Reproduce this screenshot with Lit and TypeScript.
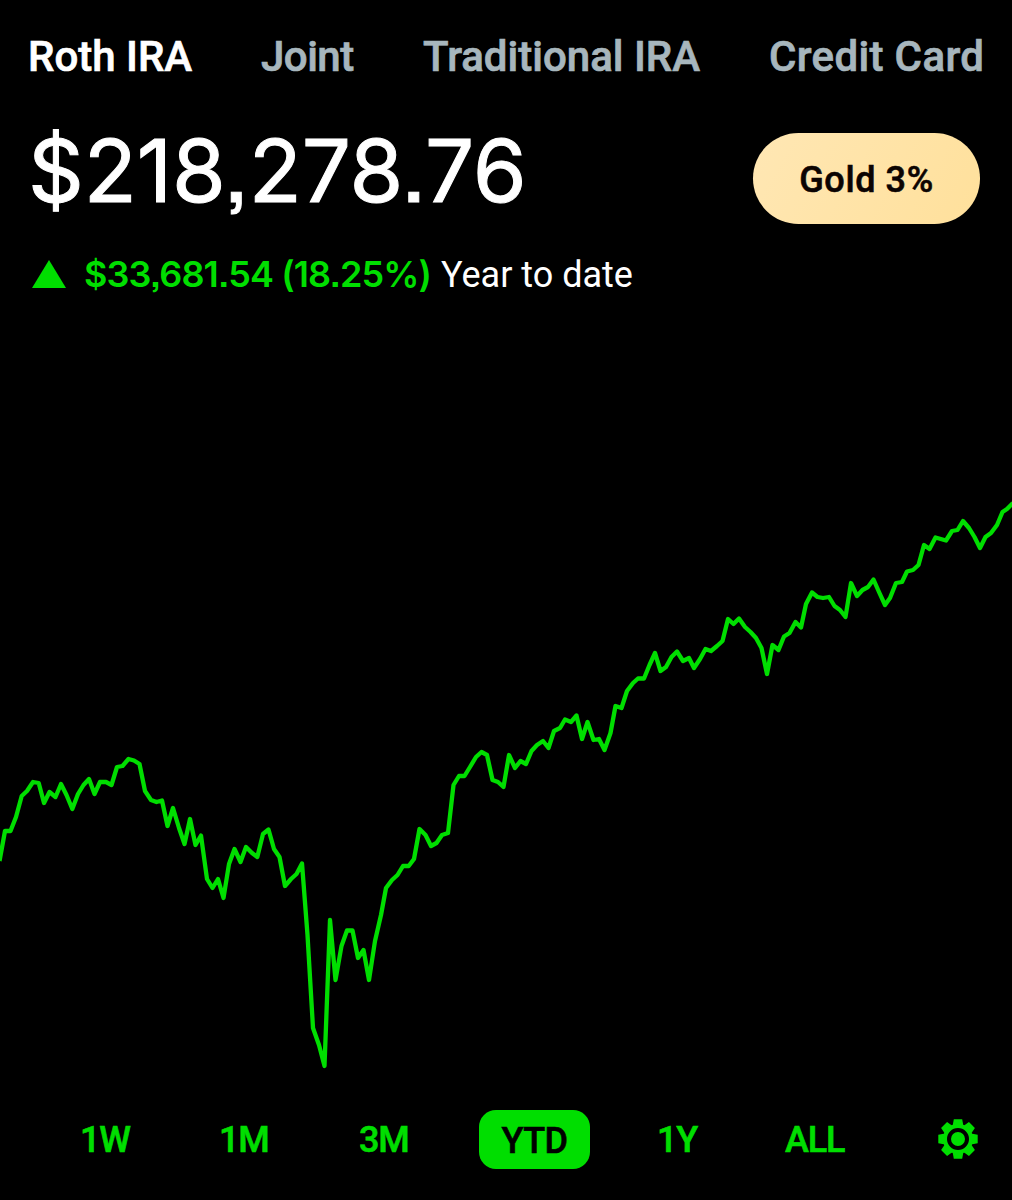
import { LitElement, html, svg, css } from "lit";
import { customElement, state } from "lit/decorators.js";
import { classMap } from "lit/directives/class-map.js";

const ACCOUNTS = [
  { name: "Roth IRA", cls: "roth" },
  { name: "Joint", cls: "joint" },
  { name: "Traditional IRA", cls: "trad" },
  { name: "Credit Card", cls: "credit" },
];
const RANGES = ["1W", "1M", "3M", "YTD", "1Y", "ALL"];

// Balance history, in chart units (x, y).
const HISTORY =
  "-0.5,861 5,831 10.5,831 16,817 21.7,796 27,791 33,782 38.7,783 44,803 49.5,792 55.5,797 61,784 66.5,795 72.3,809 78,794 83.5,785 89,779 94.5,794 100,782 106,782 111.5,785 117,767 122.5,766 128.5,759 134,760.5 139.5,764 145,791 151,800 156.5,802 162,800.5 167.5,826 173,808 179,828 184.5,844 190,819 195.5,845 201,835.5 207,879 212.5,888 218,879 223.5,898 229,864 234.5,849 240.5,862 246,847 252,853 257.3,857 263,834 268.5,829.5 274,849 279.5,857 285,886 291,879 296.5,874 302,863.5 307.5,935 313,1028 319,1045 324.5,1066 330,920 335.5,980 341.5,946 347,930.5 352.5,930.5 358,958 363.5,950 369,980 375,941 381,915 386,888 392,880 397.5,875 403,866 408.7,866 414,859 419.5,829 425.5,835 431,846 436.5,843 442,835 448,833 453.5,785 459,776 464.5,776 470,767 476,757 481.5,752 487,755 492.5,780 498,782 503.5,787 509,755 515,768 520.5,761 526,764 531.5,751 537,745 543,741 548.5,748 554,731 560,728 565,719.5 571,722 576.5,715.5 582,739 587.5,722 593.5,740 599,739 604.5,750 610.5,733 615.5,706 621.5,708 627,691 633,683 638,678.5 644,678.5 649.5,665 655,653 660.5,671 666,667 671.5,657 677,651.5 683,661 689,658 694,668 700,659 705.5,649 711,651 717,646 722.5,641 728,619 733.5,624 739,618.5 745,627 750.5,632 756,638 761.5,648 767,674 772.5,645 778.5,650 784,636.5 789.5,633 795.5,622 801,627.5 806,604 812,592.5 817.5,597 823,598 829,597 834.5,606 840,610 845.5,617 851,583 857,596 862.5,590 868,587 873.5,579.5 879,592 885,605 890,598 896,583 902,582 907,571.5 913,570 918.5,565 924,545 929.5,549 935.5,537.5 946,540.5 952,531 957.5,530 963,521 969,528 974.5,537 980,548 985.5,537 991,533 997,525 1002.5,512 1007,509 1013,503";

@customElement("app-root")
export class AppRoot extends LitElement {
  static styles = css`
    :host {
      display: flex;
      flex-direction: column;
      width: 1012px;
      height: 1200px;
      overflow: hidden;
      background: #000;
      color: #fff;
      font-family: Roboto, "Liberation Sans", sans-serif;
      white-space: nowrap;
    }
    .tabs {
      display: grid;
      grid-template-columns: 233px 162px 346px 1fr;
      height: 112px;
      padding-left: 28px;
      box-sizing: border-box;
      align-items: center;
      font-size: 42px;
      font-weight: 500;
      color: #a7b6bd;
      -webkit-text-stroke: 0.7px currentColor;
    }
    .tab.active { color: #fff; }
    .joint { letter-spacing: -0.5px; }
    .credit { letter-spacing: 0.35px; }
    .summary {
      display: flex;
      justify-content: space-between;
      height: 124px;
      padding: 0 32px 0 28px;
    }
    .balance {
      font-family: Inter, Roboto, sans-serif;
      font-feature-settings: "ss07";
      font-size: 87px;
      line-height: 118px;
      letter-spacing: -0.1px;
      -webkit-text-stroke: 1px currentColor;
    }
    .gold {
      box-sizing: border-box;
      width: 227px;
      height: 91px;
      margin-top: 21px;
      border-radius: 46px;
      background: linear-gradient(120deg, #ffe7b4, #ffe09b);
      color: #0c0402;
      font-size: 36px;
      font-weight: 500;
      letter-spacing: 0.6px;
      -webkit-text-stroke: 0.6px currentColor;
      line-height: 94px;
      text-align: center;
    }
    .change {
      display: flex;
      align-items: center;
      height: 76px;
      padding-left: 32px;
      font-size: 36px;
      line-height: 44px;
    }
    .arrow { width: 34px; height: 28px; margin-right: 18px; fill: #00de00; }
    .gain {
      width: 357px;
      color: #00de00;
      font-family: Inter, Roboto, sans-serif;
      font-feature-settings: "ss07";
      font-weight: 600;
      letter-spacing: -0.9px;
    }
    .period { padding-top: 2px; }
    .chart { display: block; width: 1012px; height: 788px; flex: none; }
    .line {
      fill: none;
      stroke: #00de00;
      stroke-width: 4.3;
      stroke-linejoin: round;
    }
    .ranges {
      display: grid;
      grid-template-columns: 139px 140px 120px 111px 67px 128px 153px 40px;
      padding-left: 80px;
      height: 78px;
      align-items: center;
      color: #00de00;
      font-size: 36px;
      font-weight: 500;
      -webkit-text-stroke: 0.6px currentColor;
    }
    .range { padding-top: 2px; letter-spacing: -1.2px; }
    .range.active {
      box-sizing: border-box;
      padding: 0;
      height: 59px;
      line-height: 62px;
      border-radius: 17px;
      background: #00de00;
      color: #000;
      text-align: center;
      letter-spacing: -0.5px;
    }
    .gear { display: block; width: 40px; height: 40px; }
  `;

  @state() private account = "Roth IRA";
  @state() private range = "YTD";

  private gear() {
    return html`<svg class="gear" viewBox="-20 -20 40 40">
      <g fill="#00de00">
        ${[0, 45, 90, 135].map(
          (a) => svg`<path transform="rotate(${a})" d="M-4.2-19.7H4.2L5.4-13V13L4.2 19.7H-4.2L-5.4 13V-13Z" />`
        )}
        <circle r="15" />
      </g>
      <circle r="9" fill="#00de00" stroke="#000" stroke-width="4" />
    </svg>`;
  }

  render() {
    return html`
      <nav class="tabs">
        ${ACCOUNTS.map(
          (a) => html`<span
            class=${classMap({ tab: true, [a.cls]: true, active: a.name === this.account })}
            @click=${() => (this.account = a.name)}
          >${a.name}</span>`
        )}
      </nav>
      <div class="summary">
        <div class="balance">$218,278.76</div>
        <div class="gold">Gold 3%</div>
      </div>
      <div class="change">
        <svg class="arrow" viewBox="0 0 34 28"><path d="M17 0L34 28H0Z" /></svg>
        <span class="gain">$33,681.54 (18.25%)</span>
        <span class="period">Year to date</span>
      </div>
      <svg class="chart" viewBox="0 312 1012 788">
        <polyline class="line" points=${HISTORY} />
      </svg>
      <div class="ranges">
        ${RANGES.map(
          (r) => html`<span
            class=${classMap({ range: true, active: r === this.range })}
            @click=${() => (this.range = r)}
          >${r}</span>${r === "YTD" ? html`<span></span>` : ""}`
        )}
        ${this.gear()}
      </div>
    `;
  }
}
